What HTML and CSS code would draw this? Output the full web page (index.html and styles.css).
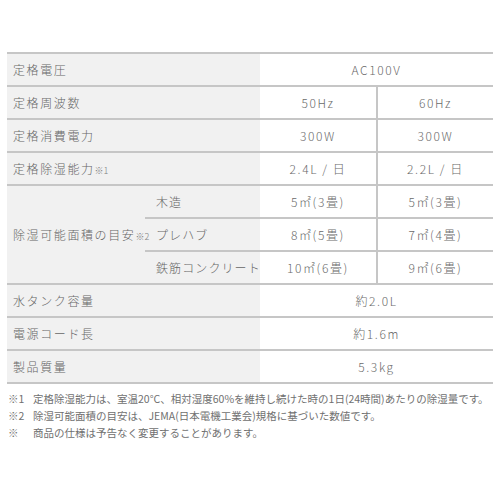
FILE: index.html
```html
<!DOCTYPE html>
<html lang="ja">
<head>
<meta charset="utf-8">
<link rel="stylesheet" href="styles.css">
</head>
<body>
<div class="page">
  <table class="spec">
    <colgroup>
      <col class="c-label">
      <col class="c-sub">
      <col class="c-v1">
      <col class="c-v2">
    </colgroup>
    <tr>
      <th colspan="2">定格電圧</th>
      <td colspan="2">AC100V</td>
    </tr>
    <tr>
      <th colspan="2">定格周波数</th>
      <td class="div">50Hz</td>
      <td>60Hz</td>
    </tr>
    <tr>
      <th colspan="2">定格消費電力</th>
      <td class="div">300W</td>
      <td>300W</td>
    </tr>
    <tr>
      <th colspan="2">定格除湿能力<span class="note">※1</span></th>
      <td class="div">2.4L / 日</td>
      <td>2.2L / 日</td>
    </tr>
    <tr>
      <th rowspan="3" class="group">除湿可能面積の目安<span class="note">※2</span></th>
      <th class="sub">木造</th>
      <td class="div">5㎡(3畳)</td>
      <td>5㎡(3畳)</td>
    </tr>
    <tr>
      <th class="sub">プレハブ</th>
      <td class="div">8㎡(5畳)</td>
      <td>7㎡(4畳)</td>
    </tr>
    <tr>
      <th class="sub">鉄筋コンクリート</th>
      <td class="div">10㎡(6畳)</td>
      <td>9㎡(6畳)</td>
    </tr>
    <tr>
      <th colspan="2">水タンク容量</th>
      <td colspan="2">約2.0L</td>
    </tr>
    <tr>
      <th colspan="2">電源コード長</th>
      <td colspan="2">約1.6m</td>
    </tr>
    <tr>
      <th colspan="2">製品質量</th>
      <td colspan="2">5.3kg</td>
    </tr>
  </table>
  <div class="notes">
    <div class="fn"><span class="mark">※1</span><span>定格除湿能力は、室温20°C、相対湿度60%を維持し続けた時の1日(24時間)あたりの除湿量です。</span></div>
    <div class="fn"><span class="mark">※2</span><span>除湿可能面積の目安は、JEMA(日本電機工業会)規格に基づいた数値です。</span></div>
    <div class="fn"><span class="mark">※</span><span>商品の仕様は予告なく変更することがあります。</span></div>
  </div>
</div>
</body>
</html>
```

FILE: styles.css
```css
html, body {
  margin: 0;
  padding: 0;
  background: #ffffff;
}

body {
  font-family: "Noto Sans CJK JP", "Noto Sans", sans-serif;
  color: #666666;
}

.page {
  padding: 52px 7px 0 7px;
}

.spec {
  width: 486px;
  border-collapse: collapse;
  table-layout: fixed;
  border-top: 2px solid #c6c6c6;
}

.c-label { width: 138px; }
.c-sub { width: 115px; }
.c-v1 { width: 117px; }
.c-v2 { width: 116px; }

.spec th,
.spec td {
  height: 31px;
  padding: 0;
  border-bottom: 2px solid #c6c6c6;
  font-size: 12px;
  font-weight: 300;
  letter-spacing: 1.6px;
  white-space: nowrap;
}

.spec th {
  background: #f1f1f1;
  text-align: left;
  padding-left: 6px;
}

.spec th.sub {
  padding-left: 11px;
  letter-spacing: 1.1px;
}

.spec td {
  text-align: center;
  background: #ffffff;
  color: #6a6a6a;
}

.spec td.div {
  border-right: 2px solid #c6c6c6;
}

.note {
  font-size: 9px;
  letter-spacing: 0;
  color: #808080;
}

.notes {
  padding-top: 6px;
  padding-left: 1px;
  display: flex;
  flex-direction: column;
}

.fn {
  display: flex;
  font-size: 10.5px;
  line-height: 17px;
  color: #707070;
  white-space: nowrap;
}

.mark {
  width: 25px;
  flex: none;
}
```
